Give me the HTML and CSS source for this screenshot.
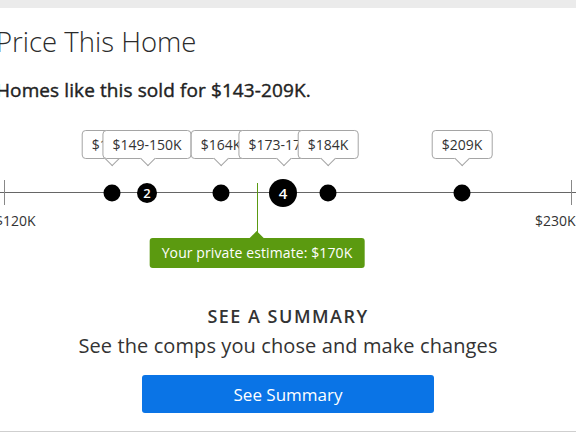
FILE: index.html
```html
<!DOCTYPE html>
<html lang="en">
<head>
<meta charset="utf-8">
<title>Price This Home</title>
<link rel="stylesheet" href="styles.css">
</head>
<body>
<div class="topbar"></div>
<main class="card">
  <h1 class="title">Price This Home</h1>
  <p class="subtitle">Homes like this sold for $143-209K.</p>
  <div class="chart">
    <div class="axis"></div>
    <div class="tick tick-left"></div>
    <div class="tick tick-right"></div>
    <span class="axis-label label-left">$120K</span>
    <span class="axis-label label-right">$230K</span>

    <div class="bubble" style="left:112px">$143K</div>
    <div class="bubble" style="left:147px">$149-150K</div>
    <div class="bubble" style="left:221px">$164K</div>
    <div class="bubble" style="left:283px">$173-176K</div>
    <div class="bubble" style="left:328px">$184K</div>
    <div class="bubble" style="left:462px">$209K</div>

    <div class="estimate-line" style="left:257px"></div>

    <div class="dot" style="left:112px"></div>
    <div class="dot dot-num" style="left:147px">2</div>
    <div class="dot" style="left:221px"></div>
    <div class="dot dot-big" style="left:283px">4</div>
    <div class="dot" style="left:328px"></div>
    <div class="dot" style="left:462px"></div>

    <div class="estimate" style="left:257px">Your private estimate: $170K</div>
  </div>
  <section class="summary">
    <h2 class="summary-title">SEE A SUMMARY</h2>
    <p class="summary-text">See the comps you chose and make changes</p>
    <button class="btn" type="button">See Summary</button>
  </section>
</main>
</body>
</html>
```

FILE: styles.css
```css
* { box-sizing: border-box; }
html, body { margin: 0; padding: 0; background: #fff; }
body {
  font-family: "Open Sans", "Liberation Sans", sans-serif;
  color: #333;
  width: 576px;
  height: 432px;
  overflow: hidden;
}
.topbar {
  height: 8px;
  background: #ebebeb;
}
.card {
  margin: 0 -4px;
  padding: 0 0 18px;
  border-bottom: 1px solid #cfcfcf;
  background: #fff;
}
.title {
  margin: 18px 0 0;
  font-size: 27.5px;
  line-height: 32px;
  font-weight: 300;
  color: #2b2b2b;
}
.subtitle {
  margin: 21px 0 0;
  font-size: 19px;
  line-height: 22px;
  font-weight: 400;
  letter-spacing: 0.1px;
  -webkit-text-stroke: 0.4px #222;
  color: #222;
}
.chart {
  position: relative;
  margin: 19px 4px 0;
  height: 150px;
}
.axis {
  position: absolute;
  left: 0;
  right: 0;
  top: 72px;
  height: 1px;
  background: #666;
}
.tick {
  position: absolute;
  top: 60px;
  width: 1px;
  height: 25px;
  background: #888;
}
.tick-left { left: 4px; }
.tick-right { left: 571px; }
.axis-label {
  position: absolute;
  top: 92px;
  font-size: 14px;
  line-height: 17px;
  color: #333;
  white-space: nowrap;
}
.label-left { left: -5px; }
.label-right { left: 535px; }
.bubble {
  position: absolute;
  top: 10px;
  transform: translateX(-50%);
  height: 29px;
  padding: 0 9px;
  border: 1px solid #a5a5a5;
  border-radius: 4px;
  background: #fff;
  font-size: 14px;
  line-height: 27px;
  color: #333;
  white-space: nowrap;
}
.bubble::after {
  content: "";
  position: absolute;
  left: 50%;
  bottom: -6px;
  width: 10px;
  height: 10px;
  margin-left: -5px;
  background: #fff;
  border-right: 1px solid #a5a5a5;
  border-bottom: 1px solid #a5a5a5;
  transform: rotate(45deg);
}
.dot {
  position: absolute;
  top: 72.5px;
  width: 17px;
  height: 17px;
  border-radius: 50%;
  background: #000;
  transform: translate(-50%, -50%);
  color: #fff;
  font-size: 13px;
  font-weight: 600;
  display: flex;
  align-items: center;
  justify-content: center;
}
.dot-num { width: 20px; height: 20px; }
.dot-big { width: 28px; height: 28px; font-size: 15px; }
.estimate-line {
  position: absolute;
  top: 63px;
  width: 1px;
  height: 56px;
  background: #5a9a12;
}
.estimate {
  position: absolute;
  top: 118px;
  transform: translateX(-50%);
  height: 30px;
  padding: 0 12px;
  border-radius: 3px;
  background: #5b9a10;
  color: #fff;
  font-size: 14px;
  letter-spacing: 0.1px;
  line-height: 30px;
  white-space: nowrap;
}
.estimate::before {
  content: "";
  position: absolute;
  left: 50%;
  top: -7px;
  margin-left: -7px;
  border-left: 7px solid transparent;
  border-right: 7px solid transparent;
  border-bottom: 7px solid #5b9a10;
}
.summary {
  display: flex;
  flex-direction: column;
  align-items: center;
  margin-top: 35px;
}
.summary-title {
  margin: 0;
  font-size: 18px;
  line-height: 22px;
  font-weight: 600;
  letter-spacing: 1.5px;
  color: #333;
}
.summary-text {
  margin: 7px 0 0;
  font-size: 20px;
  line-height: 24px;
  font-weight: 400;
  letter-spacing: 0.1px;
  color: #333;
}
.btn {
  margin-top: 17px;
  width: 292px;
  height: 38px;
  border: none;
  border-radius: 3px;
  background: #0a74e6;
  color: #fff;
  font-family: inherit;
  font-size: 17px;
  font-weight: 400;
  padding: 0;
}
```
